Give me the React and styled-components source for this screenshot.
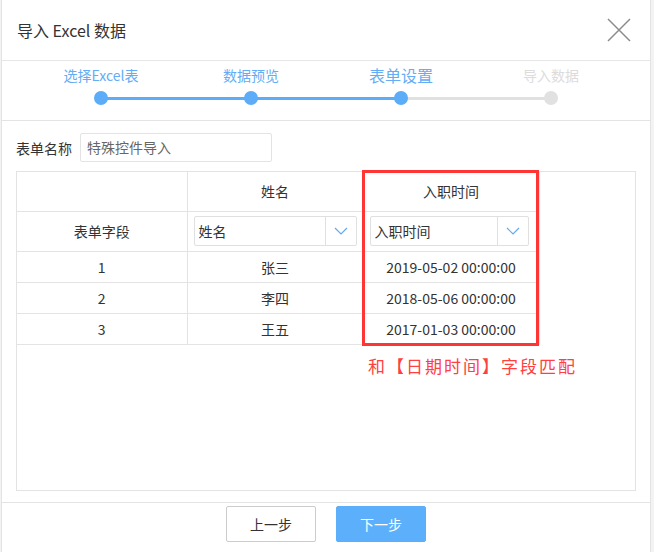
import React from "react";
import styled, { createGlobalStyle } from "styled-components";

const GlobalStyle = createGlobalStyle`
  body {
    margin: 0;
    background: #f3f3f3;
    font-family: "Noto Sans CJK SC", "Microsoft YaHei", sans-serif;
    color: #333;
  }
`;

const Dialog = styled.div`
  box-sizing: border-box;
  width: 650px;
  height: 552px;
  margin-left: 1px;
  background: #fff;
  border-left: 1px solid #e3e3e3;
  border-right: 1px solid #e3e3e3;
  display: flex;
  flex-direction: column;
`;

const Header = styled.div`
  height: 60px;
  border-bottom: 1px solid #e6e6e6;
  display: flex;
  align-items: center;
  justify-content: space-between;
  padding: 0 19px 0 15px;
`;

const Title = styled.div`
  font-size: 16px;
  color: #333;
`;

const CloseButton = styled.button`
  width: 24px;
  height: 24px;
  padding: 0;
  border: none;
  background: none;
  display: flex;
`;

const Steps = styled.div`
  height: 59px;
  border-bottom: 1px solid #e3e3e3;
  display: flex;
  justify-content: center;
`;

const Step = styled.div`
  position: relative;
  width: 150px;
  display: flex;
  flex-direction: column;
  align-items: center;
  padding-top: 4px;

  &::before {
    content: "";
    display: ${(p) => (p.$first ? "none" : "block")};
    position: absolute;
    left: -75px;
    width: 150px;
    top: 36px;
    height: 3px;
    background: ${(p) => (p.$state === "todo" ? "#e1e1e1" : "#5cacf7")};
  }
`;

const StepLabel = styled.div`
  height: 20px;
  line-height: 20px;
  font-size: ${(p) => (p.$state === "active" ? "16px" : "14px")};
  color: ${(p) => (p.$state === "todo" ? "#dcdcdc" : "#62adf5")};
`;

const Dot = styled.div`
  position: relative;
  z-index: 1;
  width: 14px;
  height: 14px;
  margin-top: 6px;
  border-radius: 50%;
  background: ${(p) => (p.$state === "todo" ? "#e1e1e1" : "#5cacf7")};
`;

const FormRow = styled.div`
  display: flex;
  align-items: center;
  padding: 12px 15px 0 14px;
  gap: 8px;
`;

const Label = styled.div`
  font-size: 14px;
  color: #333;
`;

const NameInput = styled.div`
  box-sizing: border-box;
  width: 192px;
  height: 29px;
  border: 1px solid #e3e3e3;
  border-radius: 2px;
  padding-left: 6px;
  font-size: 14px;
  line-height: 27px;
  color: #666;
`;

const Panel = styled.div`
  position: relative;
  box-sizing: border-box;
  height: 320px;
  margin: 9px 14px 0 14px;
  border: 1px solid #e3e3e3;
`;

const Grid = styled.table`
  border-collapse: collapse;
  table-layout: fixed;
  width: 522px;
  font-size: 14px;
  color: #333;
`;

const Cell = styled.td`
  box-sizing: border-box;
  width: ${(p) => p.$w}px;
  height: ${(p) => p.$h}px;
  padding: 0 ${(p) => p.$padRight || 0}px 0 ${(p) => p.$padLeft || 0}px;
  text-align: center;
  border-right: 1px solid #e3e3e3;
  border-bottom: 1px solid #e3e3e3;
`;

const Select = styled.div`
  box-sizing: border-box;
  height: 30px;
  display: flex;
  border: 1px solid #e0e0e0;
  border-radius: 2px;
  text-align: left;
`;

const SelectText = styled.div`
  flex: 1;
  padding-left: 4px;
  line-height: 28px;
  font-size: 14px;
  color: #333;
`;

const SelectArrow = styled.div`
  width: 30px;
  border-left: 1px solid #e0e0e0;
  display: flex;
  align-items: center;
  justify-content: center;
`;

const Highlight = styled.div`
  position: absolute;
  left: 345px;
  top: -2px;
  box-sizing: border-box;
  width: 177px;
  height: 176px;
  border: 3px solid #ff3535;
  pointer-events: none;
`;

const Note = styled.div`
  margin-top: 9px;
  padding-left: 351px;
  font-size: 17px;
  letter-spacing: 2px;
  color: #ff4040;
  line-height: 24px;
`;

const Footer = styled.div`
  margin-top: 11px;
  border-top: 1px solid #e3e3e3;
  display: flex;
  justify-content: center;
  gap: 20px;
  padding-top: 3px;
`;

const Button = styled.button`
  box-sizing: border-box;
  width: 90px;
  height: 36px;
  border-radius: 2px;
  font-family: inherit;
  font-size: 14px;
  border: 1px solid ${(p) => (p.$primary ? "#5cb0fb" : "#cccccc")};
  background: ${(p) => (p.$primary ? "#5cb0fb" : "#fff")};
  color: ${(p) => (p.$primary ? "#fff" : "#333")};
`;

const steps = [
  { label: "选择Excel表", state: "done" },
  { label: "数据预览", state: "done" },
  { label: "表单设置", state: "active" },
  { label: "导入数据", state: "todo" },
];

const rows = [
  ["1", "张三", "2019-05-02 00:00:00"],
  ["2", "李四", "2018-05-06 00:00:00"],
  ["3", "王五", "2017-01-03 00:00:00"],
];

const widths = [170, 176, 176];

const Chevron = () => (
  <svg width="14" height="8" viewBox="0 0 14 8">
    <path d="M1 1 L7 7 L13 1" fill="none" stroke="#64a9f0" strokeWidth="1.2" />
  </svg>
);

const FieldSelect = ({ value }) => (
  <Select>
    <SelectText>{value}</SelectText>
    <SelectArrow>
      <Chevron />
    </SelectArrow>
  </Select>
);

const App = () => {
  return (
    <Dialog>
      <GlobalStyle />
      <Header>
        <Title>导入 Excel 数据</Title>
        <CloseButton>
          <svg width="24" height="24" viewBox="0 0 24 24">
            <path d="M1 1 L23 23 M23 1 L1 23" stroke="#8c8c8c" strokeWidth="1.5" />
          </svg>
        </CloseButton>
      </Header>
      <Steps>
        {steps.map((s, i) => (
          <Step key={s.label} $first={i === 0} $state={s.state}>
            <StepLabel $state={s.state}>{s.label}</StepLabel>
            <Dot $state={s.state} />
          </Step>
        ))}
      </Steps>
      <FormRow>
        <Label>表单名称</Label>
        <NameInput>特殊控件导入</NameInput>
      </FormRow>
      <Panel>
        <Grid>
          <tbody>
            <tr>
              <Cell $w={widths[0]} $h={39}></Cell>
              <Cell $w={widths[1]} $h={39}>姓名</Cell>
              <Cell $w={widths[2]} $h={39}>入职时间</Cell>
            </tr>
            <tr>
              <Cell $w={widths[0]} $h={40}>表单字段</Cell>
              <Cell $w={widths[1]} $h={40} $padLeft={6} $padRight={6}>
                <FieldSelect value="姓名" />
              </Cell>
              <Cell $w={widths[2]} $h={40} $padLeft={6} $padRight={10}>
                <FieldSelect value="入职时间" />
              </Cell>
            </tr>
            {rows.map((r) => (
              <tr key={r[0]}>
                {r.map((v, j) => (
                  <Cell key={j} $w={widths[j]} $h={31}>
                    {v}
                  </Cell>
                ))}
              </tr>
            ))}
          </tbody>
        </Grid>
        <Highlight />
        <Note>和【日期时间】字段匹配</Note>
      </Panel>
      <Footer>
        <Button>上一步</Button>
        <Button $primary>下一步</Button>
      </Footer>
    </Dialog>
  );
};

export default App;
